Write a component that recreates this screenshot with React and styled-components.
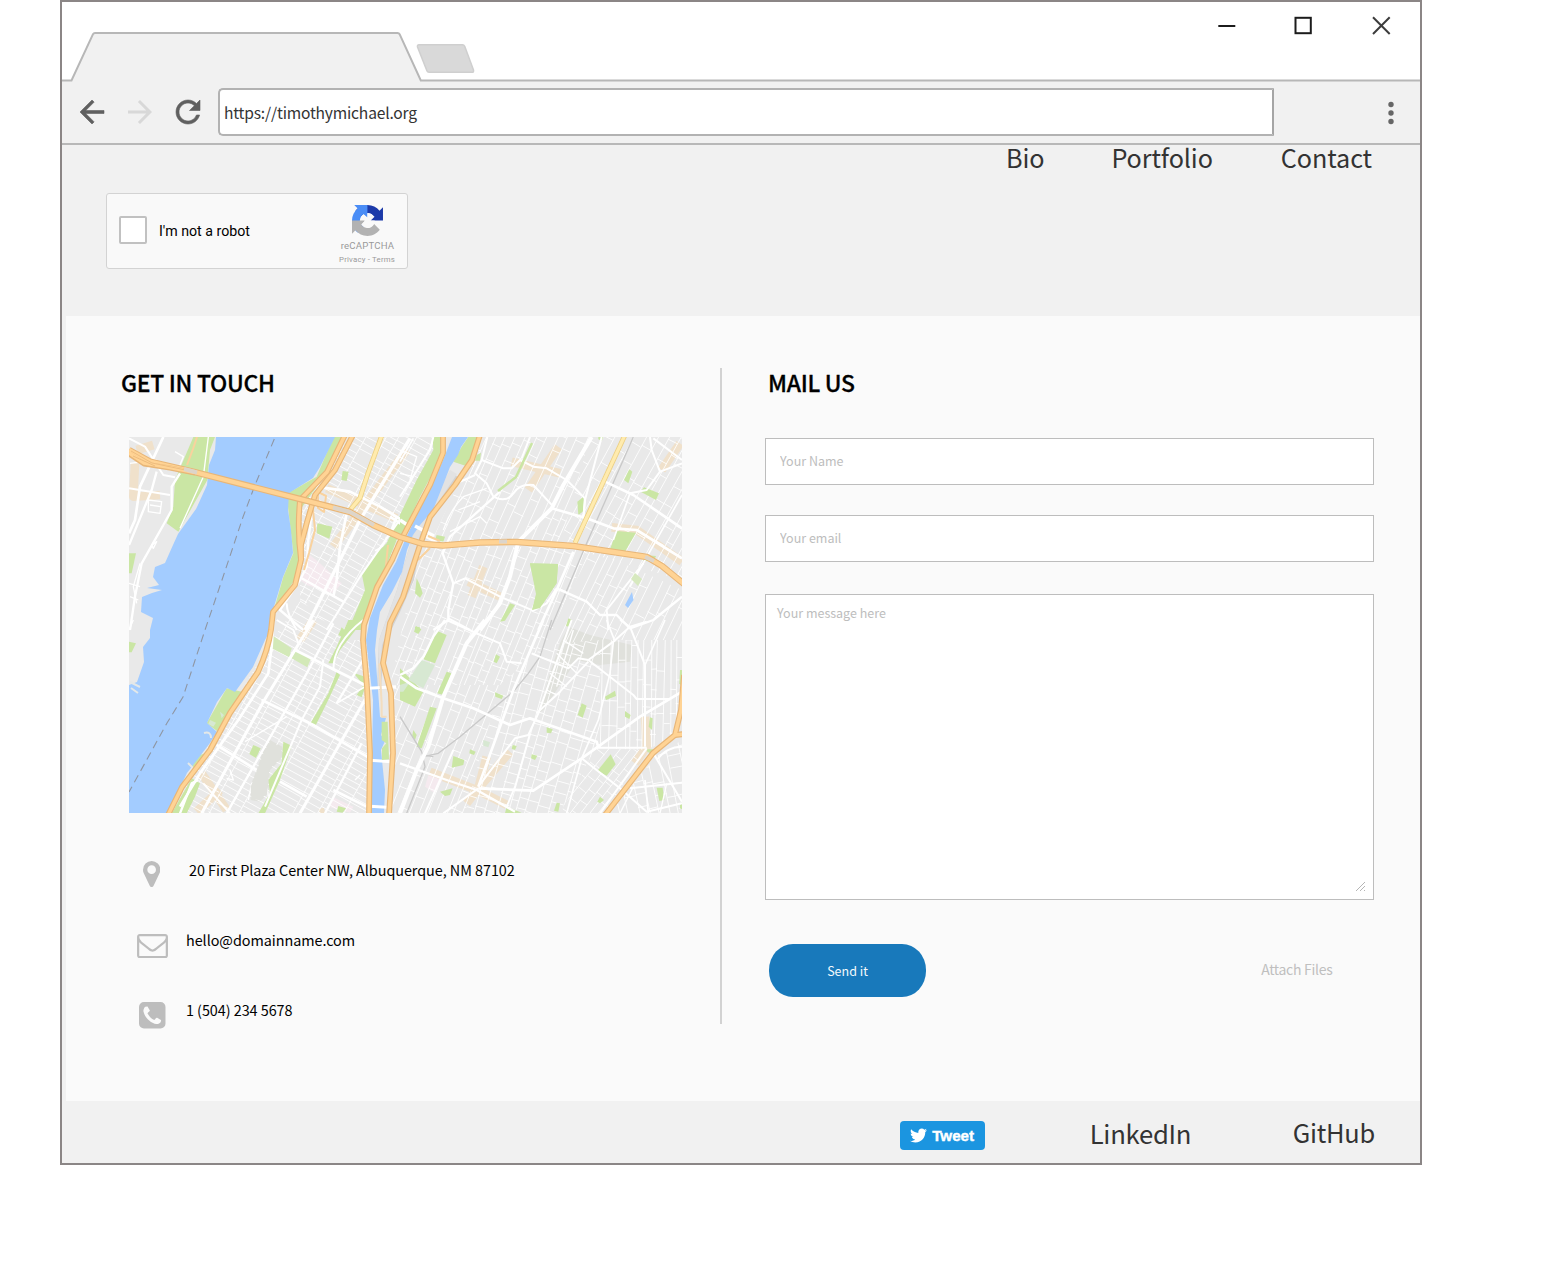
import React from 'react';
import styled, { createGlobalStyle } from 'styled-components';
import { FaTwitter } from 'react-icons/fa';

const GlobalStyle = createGlobalStyle`
  * { box-sizing: border-box; }
  body { margin: 0; background: #fff; font-family: "Noto Sans CJK SC", "Noto Sans", sans-serif; color: #000; }
  svg { display: block; flex: none; }
`;

const Window = styled.div`
  width: 1362px;
  height: 1165px;
  margin-left: 60px;
  border: 2px solid #8b8686;
  background: #f1f1f1;
  display: flex;
  flex-direction: column;
`;

const Toolbar = styled.div`
  height: 61px;
  flex: none;
  display: flex;
  align-items: center;
  padding: 0 12px 1px;
`;

const NavIcon = styled.svg`
  width: 36px;
  height: 36px;
  margin-right: ${p => p.$gap ?? 12}px;
  fill: ${p => (p.$dim ? '#d8d8d8' : '#606060')};
`;

const AddressBar = styled.div`
  width: 1056px;
  height: 48px;
  border: 2px solid #b2b2b2;
  border-right-color: #a5a5a5;
  border-radius: 5px 0 0 5px;
  background: #fff;
  color: #333;
  font-size: 15.6px;
  letter-spacing: -0.2px;
  line-height: 45px;
  padding-left: 4px;
`;

const MenuDots = styled.svg`
  width: 8px;
  height: 26px;
  margin: 2px 13.5px 0 auto;
  fill: #666;
`;

const Header = styled.header`
  height: 173px;
  flex: none;
  border-top: 2px solid #b8b8b8;
`;

const Nav = styled.nav`
  display: flex;
  justify-content: flex-end;
  gap: 67px;
  padding-right: 48px;
  height: 48px;
`;

const NavLink = styled.a`
  font-size: ${p => p.$size ?? 25.2}px;
  letter-spacing: ${p => p.$track ?? -0.1}px;
  line-height: 24px;
  color: #333;
  margin-top: ${p => p.$top ?? 0}px;
  margin-right: ${p => p.$right ?? 0}px;
`;

const Captcha = styled.div`
  width: 302px;
  height: 76px;
  margin-left: 44px;
  border: 1px solid #d3d3d3;
  border-radius: 3px;
  background: #f9f9f9;
  font-family: Roboto, sans-serif;
  display: flex;
  align-items: center;
  padding: 0 12px;
`;

const CheckBox = styled.div`
  width: 28px;
  height: 28px;
  border: 2px solid #c1c1c1;
  border-radius: 2px;
  background: #fff;
  margin: -2px 12px 0 0;
`;

const CaptchaLabel = styled.span`
  font-size: 14.2px;
  line-height: 20px;
`;

const CaptchaBrand = styled.div`
  margin-left: auto;
  margin-top: 8px;
  display: flex;
  flex-direction: column;
  align-items: center;
  svg { margin-left: 1px; }
`;

const BrandLine = styled.span`
  font-size: ${p => p.$size}px;
  line-height: ${p => p.$line}px;
  letter-spacing: ${p => p.$track}px;
  margin-left: ${p => p.$shift ?? 0}px;
  color: #999;
`;

const Contact = styled.main`
  height: 785px;
  flex: none;
  margin-left: 4px;
  background: #fafafa;
  display: grid;
  grid-template-columns: 654px 2px 1fr;
  padding-top: 52px;
`;

const Divider = styled.div`
  height: 656px;
  background: #d2d2d2;
`;

const Title = styled.h2`
  margin: 0 0 0 ${p => p.$left}px;
  height: 30px;
  font-size: 22.9px;
  font-weight: 500;
  letter-spacing: -0.28px;
  line-height: 28.6px;
  -webkit-text-stroke: 0.3px #000;
`;

const MapFrame = styled.div`
  margin: 39px 0 0 63px;
  width: 553px;
  height: 376px;
  overflow: hidden;
`;

const ContactList = styled.ul`
  list-style: none;
  margin: 22px 0 0;
  padding: 0 0 0 71px;
`;

const ContactRow = styled.li`
  height: 70px;
  display: flex;
  align-items: center;
  font-size: 14.4px;
  letter-spacing: -0.05px;
  line-height: 22px;
`;

const IconCell = styled.span`
  width: 31px;
  margin-top: ${p => p.$drop}px;
  margin-right: ${p => p.$gap}px;
  padding-right: ${p => p.$inset ?? 0}px;
  display: flex;
  justify-content: center;
  svg { fill: #bdbdbd; }
`;

const Form = styled.form`
  display: flex;
  flex-direction: column;
  width: 609px;
  margin: 40px 0 0 43px;
`;

const Field = styled.input`
  height: 47px;
  border: 1px solid #bdbdbd;
  background: #fff;
  padding: 0 14px 2px;
  margin-bottom: ${p => p.$after}px;
  font: 12.5px "Noto Sans CJK SC", sans-serif;
  outline: 0;
  &::placeholder { color: #bdbdbd; opacity: 1; }
`;

const MessageBox = styled.div`
  position: relative;
  height: 306px;
`;

const Message = styled.textarea`
  display: block;
  width: 100%;
  height: 100%;
  border: 1px solid #bdbdbd;
  background: #fff;
  padding: 8px 11px;
  resize: none;
  outline: 0;
  font: 12.5px/20px "Noto Sans CJK SC", sans-serif;
  &::placeholder { color: #bdbdbd; opacity: 1; }
`;

const Grip = styled.svg`
  position: absolute;
  right: 8px;
  bottom: 8px;
  stroke: #b5b5b5;
  fill: none;
`;

const Actions = styled.div`
  display: flex;
  justify-content: space-between;
  align-items: center;
  margin-top: 44px;
  padding: 0 41.5px 0 4px;
`;

const SendButton = styled.button`
  width: 157px;
  height: 53px;
  border: 0;
  border-radius: 24px / 26px;
  background: #1879bb;
  color: #f4f9fc;
  font: 12.5px "Noto Sans CJK SC", sans-serif;
  padding: 0;
`;

const Attach = styled.a`
  font-size: 14px;
  letter-spacing: -0.28px;
  line-height: 20px;
  color: #bfbfbf;
  margin-top: -3px;
`;

const Footer = styled.footer`
  flex: 1;
  display: flex;
  align-items: flex-start;
  justify-content: flex-end;
  padding: 20px 45px 0 0;
`;

const Tweet = styled.button`
  width: 85px;
  height: 29px;
  margin-right: 104.5px;
  border: 0;
  border-radius: 4px;
  background: #1b95e0;
  color: #fff;
  display: flex;
  align-items: center;
  gap: 5px;
  padding: 0 0 0 10px;
  font: 700 15.2px "Liberation Sans", sans-serif;
  -webkit-text-stroke: 0.4px #fff;
`;

/* ---------- map ---------- */

function seeded(seed) {
  let s = seed;
  return () => ((s = (s * 16807) % 2147483647) / 2147483647);
}

// Irregular block grid: long streets with cross streets broken from block to block.
function blocks({ cx, cy, angle, w, h, long, cross, seed = 7, skip = 0.12 }) {
  const rnd = seeded(seed);
  const a = (angle * Math.PI) / 180;
  const pt = (u, v) =>
    `${(cx + u * Math.cos(a) - v * Math.sin(a)).toFixed(1)} ${(cy + u * Math.sin(a) + v * Math.cos(a)).toFixed(1)}`;
  let d = '';
  for (let u = -w / 2; u < w / 2; ) {
    const step = long * (0.75 + rnd() * 0.5);
    d += `M${pt(u, -h / 2)}L${pt(u + (rnd() - 0.5) * 4, h / 2)}`;
    const off = rnd() * cross;
    for (let v = -h / 2 + off; v < h / 2; v += cross * (0.85 + rnd() * 0.3)) {
      if (rnd() > skip) d += `M${pt(u, v)}L${pt(u + step, v + (rnd() - 0.5))}`;
    }
    u += step;
  }
  return d;
}

const DISTRICTS = [
  { area: '320,475 350,437 443,437 400,540 345,640 300,600 301,500', cx: 360, cy: 520, angle: 29, w: 190, h: 280, long: 15, cross: 6.6, seed: 5 },
  { area: '301,600 345,640 370,640 370,813 168,813 272,640', cx: 275, cy: 700, angle: 29, w: 260, h: 340, long: 23, cross: 6.2, seed: 11, skip: 0.04 },
  { area: '480,437 590,437 560,545 430,545', cx: 510, cy: 490, angle: 24, w: 190, h: 190, long: 9, cross: 17, seed: 21, skip: 0.3 },
  { area: '590,437 682,437 682,580 560,545', cx: 630, cy: 500, angle: 29, w: 180, h: 200, long: 9.5, cross: 20, seed: 31, skip: 0.3 },
  { area: '420,545 590,548 545,645 500,685 390,685', cx: 470, cy: 620, angle: 22, w: 230, h: 220, long: 8.5, cross: 13, seed: 41, skip: 0.25 },
  { area: '590,548 682,590 682,640 600,640 545,645 560,620', cx: 620, cy: 620, angle: 26, w: 180, h: 180, long: 9, cross: 20, seed: 51, skip: 0.5 },
  { area: '390,685 500,685 465,813 389,813', cx: 440, cy: 740, angle: 22, w: 170, h: 190, long: 9, cross: 18, seed: 61, skip: 0.35 },
  { area: '500,685 545,645 600,640 600,740 560,813 465,813', cx: 540, cy: 730, angle: 16, w: 170, h: 210, long: 10, cross: 11, seed: 71, skip: 0.2 },
  { area: '600,640 682,640 682,735 645,750 600,748', cx: 640, cy: 700, angle: 1, w: 110, h: 130, long: 7, cross: 22, seed: 81, skip: 0.3 },
  { area: '598,748 645,750 605,813 560,813', cx: 600, cy: 780, angle: 38, w: 110, h: 100, long: 9, cross: 14, seed: 91 },
  { area: '682,740 682,813 610,813 655,757', cx: 650, cy: 785, angle: -12, w: 90, h: 90, long: 11, cross: 14, seed: 95, skip: 0.3 },
];

// Four sheets of the map, each drawn on its own triple-scale grid.
const SHEETS = [
  {
    origin: [120, 430],
    sand: ['M860 60L640 350', 'M620 175L830 265', 'M100 45L50 60M45 100L40 200L120 195'],
    pink: ['570,375 600,400 665,460 640,490 560,465 540,450'],
    parks: [
      '220,21 285,21 270,60 262,150 175,305 140,280 160,230 165,150',
      '870,205 835,265 800,340 770,370 725,430 735,480 685,600 735,600 790,430 830,330 870,270',
      '592,280 637,290 628,326 590,310', '668,123 686,125 680,153 664,150',
      '640,21 680,21 590,170 540,240 548,380 530,440 460,545 490,440 520,370 505,240 500,190 520,180 590,140',
      '27,370 48,370 35,430 27,430',
    ],
    grey: [],
    thin: 'M30 100L110 90M85 210L125 215L120 250L85 245ZM90 225L122 230M60 400L40 470L50 520M27 460L60 470M30 500L55 510M165 65L190 80L180 105M265 21L250 140L180 295M95 345L110 335L100 355Z',
    roads: [
      [8, 'M130 21L60 170L45 270L27 310'], [6, 'M27 175L150 195'], [7, 'M110 125L95 180L27 345'],
      [7, 'M180 130L155 170L155 240L130 285L65 400L45 500L30 600'], [6, 'M27 25L75 50L130 135L165 142'],
      [10, 'M870 25L720 270L555 600'], [8, 'M605 172L690 185L780 230L870 285'], [6, 'M870 225L720 440L620 600'],
      [8, 'M680 250L660 350L650 450L640 500'], [7, 'M545 445L670 515'], [7, 'M580 210L565 330L560 410L540 450L480 540L550 600'],
      [6, 'M500 520Q500 550 530 600'], [8, 'M810 260L870 300M830 260L815 300'], [5, 'M800 320Q795 350 765 362'],
    ],
    rail: [],
  },
  {
    origin: [400, 430],
    sand: ['M475 50L385 180', 'M335 95L480 130', 'M250 410L215 500', 'M205 455L300 500', 'M840 40L785 120', 'M635 292L710 300L846 395'],
    pink: [],
    parks: [
      '98,21 130,21 127,75 60,200 0,330 0,255 50,150 100,60', '205,21 240,21 205,110 160,95 185,50',
      '390,400 474,402 470,460 420,535 397,540 410,490', '650,303 708,308 675,365 630,358',
      '732,172 777,190 768,210 722,185', '688,118 697,125 685,160 672,150', '550,200 555,240 535,255 532,215',
      '330,520 345,525 315,572 300,575', '230,75 243,68 240,92 225,92', '110,315 135,320 130,335 105,330',
      '50,445 60,465 68,490 60,503 45,490', '505,565 515,570 505,590 498,588', '735,375 768,378 760,395 730,392',
      '0,490 18,485 15,505 0,510', '45,590 60,592 58,600 45,600', '595,21 610,21 605,33 595,28',
    ],
    grey: [],
    thin: 'M130 300Q150 240 190 200L260 175M150 305L240 260L260 280M175 240L240 215M0 60L50 80L30 150M0 130L40 140',
    roads: [
      [6, 'M245 90L310 115L335 115L360 90L400 110L440 115L500 150L555 205L550 265'], [6, 'M390 21L365 85'],
      [12, 'M575 21L490 165L455 235L355 335L330 440L300 520L240 600'], [8, 'M455 235L560 265L640 295L710 300L846 385'],
      [6, 'M262 21L245 90L225 130L260 160L280 200Q320 220 340 190Q360 160 400 165L460 230'],
      [7, 'M300 185L150 320L128 370L160 460L145 540L145 570L100 600'], [6, 'M170 160L225 135'],
      [8, 'M615 155L700 195L846 295'], [6, 'M750 21L755 60L780 125L846 100'], [6, 'M780 125L740 180L690 190'],
      [8, 'M520 365L470 480L415 600'], [6, 'M605 21L555 210L550 265'], [7, 'M470 475L560 515L600 555L650 555L690 595L760 570L846 500'],
      [6, 'M160 460L195 445L300 500L400 542L440 520L470 475'], [6, 'M145 565L210 600'], [6, 'M730 400L620 540L625 600'],
      [5, 'M846 195L690 470M690 190L640 330'], [6, 'M760 25L846 90'], [6, 'M100 21L90 60L0 200'], [10, 'M0 270L60 310L110 335'],
      [5, 'M0 95L40 25'],
    ],
    rail: ['M700 21L560 340L450 600'],
  },
  {
    origin: [120, 620],
    sand: ['M580 0L540 60', 'M245 460L320 570', 'M300 510L230 575', 'M615 575L600 580'],
    pink: ['640,532 700,560 690,578 630,562'],
    parks: [
      '665,22 678,35 668,52 655,45', '685,0 730,0 660,90 640,130 625,130 650,80',
      '650,155 660,165 620,250 585,320 570,312 625,220', '320,205 365,215 300,340 260,310', '400,375 422,385 408,414 388,402',
      '490,365 515,377 480,480 435,580 415,580 450,520 445,480 485,430', '215,475 240,490 225,530 200,580 155,580',
      '700,158 735,170 738,195 725,232 710,225 730,195', '655,558 678,565 668,578 650,575', '27,65 48,70 35,97 27,97',
      '240,405 255,400 230,450 205,435',
    ],
    pale: ['525,88 573,115 562,142 515,115', '455,45 515,85 508,112 455,85'],
    grey: ['450,360 487,380 490,410 450,450 445,520 420,545 392,540 390,500 410,450 430,390'],
    thin: 'M375 365L500 290M27 30L40 0M330 450L340 480L320 475M705 480L720 465M445 530Q440 460 395 490L385 540',
    roads: [
      [8, 'M460 0L455 80L445 160L355 300L240 460L180 560'], [9, 'M580 0L430 245L245 580'], [7, 'M640 10L560 160L400 440L320 580'],
      [8, 'M525 90L735 195'], [8, 'M425 240L580 315L745 412'], [8, 'M290 375L410 450'], [9, 'M740 230L540 580'],
      [7, 'M725 370L615 580'], [6, 'M610 120L600 200L545 300L435 560'], [8, 'M480 485L560 530'], [5, 'M650 250L735 200'],
      [6, 'M470 0L520 30L535 70'], [7, 'M735 110L650 250'], [6, 'M250 490L330 580'], [7, 'M180 580L215 490L235 480'], [6, 'M730 0Q640 70 640 150'],
      [8, 'M640 510L740 560'],
    ],
    rail: [],
  },
  {
    origin: [400, 620],
    sand: ['M90 455L230 510L320 555', 'M330 395L235 505L200 550', 'M260 410L235 505', 'M735 290L740 380L705 430'],
    pink: ['85,465 127,480 105,520 75,500'],
    parks: [
      '110,32 140,45 105,130 70,118 85,90', '0,145 70,215 45,260 0,240', '140,155 155,160 130,225 112,220',
      '90,260 110,265 65,385 50,380', '160,408 193,420 190,435 155,443', '120,515 158,505 150,525 135,528', '320,560 365,578 315,580',
      '545,250 560,257 548,293 533,285', '440,322 458,328 453,340 440,338', '395,403 412,407 405,420 393,415',
      '632,403 647,433 620,467 592,453', '615,230 645,212 648,228 618,240', '675,273 692,285 688,297 675,290',
      '285,217 310,227 305,237 286,230', '288,103 300,110 290,130 281,125', '210,388 227,395 222,405 208,400',
      '48,18 64,28 55,42 42,35', '770,503 788,503 793,540 778,543', '470,548 480,550 475,575 462,572', '338,375 350,378 345,390 335,386',
      '840,150 846,150 846,200 838,190', '750,292 758,295 756,330 746,320', '600,530 612,540 600,550 592,545', '40,330 50,345 45,360 36,350',
      '840,555 846,552 846,568 840,565', '740,388 760,388 750,400 742,395',
    ],
    pale: ['65,120 105,135 70,205 25,180', '0,195 30,185 10,215 0,215', '250,360 270,367 265,382 250,377'],
    grey: ['505,20 570,45 695,75 690,125 600,135 530,120 430,270 415,280 450,160 480,70'],
    thin: 'M470 100L530 160M450 160L500 200M490 60L550 100M440 210L470 225M520 30L470 200M700 500L660 580M800 490L780 580',
    roads: [
      [12, 'M255 0L200 70L130 230L85 380L50 450L0 580'], [7, 'M135 0L100 50L70 110L40 145L0 165'],
      [8, 'M0 170L50 205L130 235L220 265L330 315L390 295L590 365L595 382'], [6, 'M230 40L300 70L320 125L365 130'],
      [6, 'M140 0L235 42'], [8, 'M430 0L340 210L235 500'], [6, 'M395 100L505 145L535 115L565 120L640 65L690 20L740 5'],
      [6, 'M515 0L415 280L385 345L345 355L235 500'], [6, 'M565 125L480 215L410 280'], [6, 'M565 120L700 225L710 237L810 237'],
      [5, 'M640 65L630 160L595 300L545 415L500 580'], [8, 'M846 215L720 290L545 415L400 512L235 505'],
      [6, 'M690 20L735 135L735 380'], [6, 'M590 383L740 383'], [6, 'M235 505L130 580'], [7, 'M0 430L140 480L230 510L345 575'],
      [6, 'M740 385L600 580'], [6, 'M545 415L660 505L740 575L846 550'], [6, 'M760 400L846 545'], [6, 'M690 505L846 488'],
      [5, 'M390 340L345 500L320 560'], [5, 'M795 0L735 135M620 0L645 65M660 0L690 20'], [6, 'M770 420Q800 380 846 380'], [5, 'M735 480L745 580'],
      [6, 'M160 390L75 580'],
    ],
    rail: ['M455 0L420 110L385 160L340 215L180 350L115 400L70 410', 'M0 290L65 395L75 440L20 580', 'M100 410L70 405'],
  },
];

const BRIDGE = 'M129 450L150 461.700L193 471.700L253 487L300 499L350 512L373 525L400 537L423 544L443 545.500L480 542.500L517 542L573 546L647 557L662 566L684 584';
const HIGHWAYS = [
  'M345 435L327 472L300 500Q297 530 301 560L295 585L273 612L271 630Q268 650 258 672L230 713L210 750L182 787L168 815',
  'M353 435L335 470L315 495L307 522L301 545L301 560',
  'M443 435L443 453L430 485L400 542L392 560L377 587L364 625L363 640L367 687L370 753L369 815',
  'M480 435L472 460L455 485L430 517L420 545L403 597L390 623L383 663L391 693L393 753L389 815',
  'M684 675L681 710L675 735L653 753L605 815',
  'M675 735L684 734',
];
const PARKWAYS = ['M625 435L587 517L575 543', 'M382 435L368 473L360 498L350 510'];

function CityMap() {
  return (
    <svg width="553" height="376" viewBox="129 437 553 376" fill="none" strokeLinejoin="round">
      <rect x="129" y="437" width="553" height="376" fill="#e9e9e9" />
      {SHEETS.map((s, i) => (
        <g key={i} transform={`translate(${s.origin}) scale(.33333)`}>
          <g stroke="#f0e1cb" strokeWidth="26">{s.sand.map(d => <path key={d} d={d} />)}</g>
          {s.pink.map(p => <polygon key={p} points={p} fill="#f5eaef" />)}
          {s.grey.map(p => <polygon key={p} points={p} fill="#e0e1dc" />)}
        </g>
      ))}
      {DISTRICTS.map((b, i) => (
        <g key={i}>
          <clipPath id={`d${i}`}><polygon points={b.area} /></clipPath>
          <path d={blocks(b)} clipPath={`url(#d${i})`} stroke="#fff" strokeWidth="1" opacity=".85" />
        </g>
      ))}
      {SHEETS.map((s, i) => (
        <g key={i} transform={`translate(${s.origin}) scale(.33333)`}>
          {s.parks.map(p => <polygon key={p} points={p} fill="#cae6a4" />)}
          {(s.pale || []).map(p => <polygon key={p} points={p} fill={i === 2 ? '#d3e9b8' : '#d7e8d2'} />)}
          <path d={s.thin} stroke="#fff" strokeWidth="4" />
          <g stroke="#c9c9c9" strokeWidth="4">{s.rail.map(d => <path key={d} d={d} />)}</g>
          {s.roads.map(([w, d]) => <path key={d} d={d} stroke="#fff" strokeWidth={w} />)}
        </g>
      ))}
      <g transform="translate(120 620) scale(.33333)">
        <polygon points="450,366 484,382 486,410 448,448 442,516 420,541 394,536 392,500 412,450 432,395" fill="#e0e1dc" />
      </g>
      <path d="M532 443L525 458L516 477L498 491" stroke="#cae6a4" strokeWidth="2.500" />
      <polygon points="530,563.500 558,564 556.500,583 540,608 532,610 536,594" fill="#cae6a4" />
      <polygon points="635,573 642,579 638,586 631,579" fill="#d7e9bf" />
      <polygon points="632,592 633.500,600 628,608 625,605" fill="#a3ccff" />

      <polygon fill="#a3ccff" points="216,437 215,450 209,465 207,485 197,507 196,509 178,534 173,545 165,563 155,567 153,577 159,585 147,588 162,590 152,593 142,597 141,612 153,618 150,630 150,638 143,647 144,662 137,682 129,685 129,813 168,813 187,773 210,743 217,732 207,723 217,702 227,688 235,692 253,667 265,640 270,630 273,610 283,577 293,553 291,530 288,510 289,493 313,478 320,467 335,437" />
      <path d="M130 682L140 687M131 688L138 693M204 733Q211 731 211 738M188 763L193 768" stroke="#e4e8e8" strokeWidth="2" />
      <polygon fill="#d3d3d3" points="455,475 458,477 434,512 422,535 414,580 400,612 384,645 381,690 377,690 379,640 397,590 407,555 414,533" />
      <polygon fill="#e2e2e2" points="450,470 457,474 432,512 420,535 411,575 397,612 382,645 379,690 378,690 379,640 397,590 407,555 414,533" />
      <polygon fill="#a3ccff" points="452,437 468,437 461,447 458,455 450,467 441,490 433,510 420,525 413,535 407,550 402,572 392,592 380,612 377,630 375,650 378,690 380,717 386,718 381,735 385,741 381,750 382,760 385,790 384,813 371,813 373,700 366,640 370,618 383,585 396,562 405,540 412,525 431,487 444,458" />
      <g transform="translate(120 620) scale(.33333)">
        <path d="M745 205L828 200M750 421L825 426M750 559L800 562" stroke="#fff" strokeWidth="9" />
        <path d="M778 130L785 250L785 290L800 290" stroke="#f3ddbf" strokeWidth="6" />
        <polygon points="785,305 803,305 807,418 786,420 786,385 799,370 785,360" fill="#cae6a4" />
        <path d="M300 275L312 285L305 295ZM270 300L288 308L280 320L265 312Z" fill="#d7e8d2" />
      </g>
      <path d="M415 526L434 536" stroke="#fff" strokeWidth="3.500" />
      <path d="M274.300 439L255 485L243 517L223 577L205 630L183 697L167 723L129 792" stroke="#8f96a3" strokeWidth="1.100" strokeDasharray="8 5" />

      <g stroke="#f9d29e" strokeWidth="2">
        <path d="M187 465L193 449L197 437M318 492L326 496L324 512L318 508Z" />
        <path d="M312 500L315 530L309 553L304 570M395 560L386 565L388 545M428 536L440 541M418 560L430 548" />
      </g>
      <g stroke="#edd083" strokeWidth="5">{PARKWAYS.map(d => <path key={d} d={d} />)}</g>
      <g stroke="#ffebae" strokeWidth="3.300">{PARKWAYS.map(d => <path key={d} d={d} />)}</g>
      <g stroke="#e8b678" strokeWidth="5.800">{HIGHWAYS.map(d => <path key={d} d={d} />)}</g>
      <g stroke="#ffd394" strokeWidth="3.500">{HIGHWAYS.map(d => <path key={d} d={d} />)}</g>
      <path d={BRIDGE} stroke="#e8b678" strokeWidth="6.500" />
      <path d={BRIDGE} stroke="#ffd394" strokeWidth="4.300" />
      <path d="M129 454L144 464L170 468L195 473" stroke="#e8b678" strokeWidth="5" />
      <path d="M129 453L144 463L170 467.500L195 472.500" stroke="#ffd394" strokeWidth="3.500" />
      <path d="M131 451L152 463L195 472M133 456L155 466" stroke="#e8b678" strokeWidth=".8" />
      <path d="M184 469L197 472.500M333 507.500L350 512L374 525M499 541.500L507 541.500M645 557L654 561" stroke="#ddd5ca" strokeWidth="4" />
    </svg>
  );
}

/* ---------- icons ---------- */

const PinIcon = () => (
  <svg width="17.300" height="26" viewBox="384 128 1024 1536"><path d="M1152 640q0-106-75-181t-181-75-181 75-75 181 75 181 181 75 181-75 75-181zm256 0q0 109-33 179l-364 774q-16 33-47.500 52t-67.500 19-67.500-19-46.500-52l-365-774q-33-70-33-179 0-212 150-362t362-150 362 150 150 362z" /></svg>
);
const MailIcon = () => (
  <svg width="31" height="24.300" viewBox="0 256 1792 1408"><path d="M1664 1504v-768q-32 36-69 66-268 206-426 338-51 43-83 67t-86.500 48.500-102.500 24.500h-2q-48 0-102.500-24.500t-86.500-48.500-83-67q-158-132-426-338-37-30-69-66v768q0 13 9.500 22.500t22.500 9.500h1472q13 0 22.500-9.500t9.500-22.500zm0-1051v-24.500l-.5-13-3-12.500-5.500-9-9-7.500-14-2.500h-1472q-13 0-22.500 9.500t-9.500 22.500q0 168 147 284 193 152 401 317 6 5 35 29.500t46 37.500 44.500 31.500 50.500 27.500 43 9h2q20 0 43-9t50.500-27.500 44.500-31.500 46-37.500 35-29.500q208-165 401-317 54-43 100.500-115.500t46.500-131.500zm128-37v1088q0 66-47 113t-113 47h-1472q-66 0-113-47t-47-113v-1088q0-66 47-113t113-47h1472q66 0 113 47t47 113z" /></svg>
);
const PhoneIcon = () => (
  <svg width="26.500" height="26.500" viewBox="128 128 1536 1536"><path d="M1408 1193q0-11-2-16t-18-16.500-40.500-25-47.500-26.500-45.500-25-28.500-15q-5-3-19-13t-25-15-21-5q-15 0-36.500 20.500t-39.500 45-38.500 45-33.500 20.500q-7 0-16.500-3.500t-15.500-6.500-17-9.500-14-8.500q-99-55-170-126.500t-127-170.500q-2-3-8.500-14t-9.500-17-6.500-15.500-3.500-16.500q0-13 20.500-33.500t45-38.500 45-39.500 20.500-36.500q0-10-5-21t-15-25-13-19q-3-6-15-28.500t-25-45.500-26.500-47.500-25-40.500-16.500-18-16-2q-48 0-101 22-46 21-80 94.500t-34 130.500q0 16 2.500 34t5 30.500 9 33 10 29.500 12.500 33 11 30q60 164 216.500 320.500t320.500 216.500q6 2 30 11t33 12.500 29.500 10 33 9 30.500 5 34 2.500q57 0 130.500-34t94.500-80q22-53 22-101zm256-777v960q0 119-84.500 203.500t-203.500 84.500h-960q-119 0-203.500-84.500t-84.500-203.500v-960q0-119 84.500-203.500t203.500-84.500h960q119 0 203.500 84.500t84.500 203.500z" /></svg>
);

const TabStrip = () => (
  <svg width="1358" height="80" viewBox="62 2 1358 80">
    <rect x="62" y="2" width="1358" height="80" fill="#fff" />
    <path d="M62 80.500H72L93 34Q93.500 33 95 33H397.500Q399 33 399.500 34L420.500 80.500H1420V83H62Z" fill="#f1f1f1" />
    <path d="M62 80.500H71.500L93 34.200Q93.600 33 95 33H397.500Q399 33 399.600 34.200L420.800 80.500H1420" fill="none" stroke="#b7b7b7" strokeWidth="2" />
    <path d="M419 44.800H462.500Q464 44.800 464.700 46.300L473.500 70Q474 72.300 472 72.300H429Q427.500 72.300 427 71L417.500 47Q417 44.800 419 44.800Z" fill="#d9d9d9" stroke="#cfcfcf" strokeWidth="1.500" strokeLinejoin="round" />
    <g fill="none" stroke="#1c1c1c" strokeWidth="2">
      <path d="M1218.300 26H1235.300" />
      <rect x="1295.500" y="17.800" width="15.300" height="15.400" />
      <path d="M1373 17.300L1389.700 34M1389.700 17.300L1373 34" stroke="#3c3c3c" />
    </g>
  </svg>
);

const CaptchaLogo = () => (
  <svg width="31" height="31" viewBox="0 0 64 64">
    <path d="M64 31.955l-.033-1.370V4.687l-7.160 7.160C50.948 4.674 42.033.093 32.050.093c-10.400 0-19.622 4.960-25.458 12.640l11.736 11.860a15.550 15.550 0 0 1 4.754-5.334c2.050-1.600 4.952-2.906 8.968-2.906.485 0 .860.057 1.135.163 4.976.393 9.288 3.140 11.828 7.124l-8.307 8.307L64 31.953" fill="#1c3aa9" />
    <path d="M31.862.094l-1.370.033H4.594l7.160 7.160C4.580 13.147 0 22.060 0 32.046c0 10.400 4.960 19.622 12.640 25.458L24.500 45.768a15.550 15.550 0 0 1-5.334-4.754c-1.600-2.050-2.906-4.952-2.906-8.968 0-.485.057-.860.163-1.135.393-4.976 3.140-9.288 7.124-11.828l8.307 8.307L31.860.095" fill="#4a8df6" />
    <path d="M.001 32.045l.033 1.370v25.898l7.160-7.160c5.860 7.173 14.774 11.754 24.760 11.754 10.400 0 19.622-4.960 25.458-12.640l-11.736-11.860a15.550 15.550 0 0 1-4.754 5.334c-2.050 1.600-4.952 2.906-8.968 2.906-.485 0-.860-.057-1.135-.163-4.976-.393-9.288-3.140-11.828-7.124l8.307-8.307c-10.522.040-22.400.066-27.295-.005" fill="#b2b2b2" />
    <path d="M32 17L40 18.500L46.500 24L38.500 32H47L44 41L36 47L28 46L20 41L26.500 32.500L18.500 24L24 19L32 26Z" fill="#f9f9f9" />
  </svg>
);

const ARROW = 'M20 11H7.830l5.590-5.590L12 4l-8 8 8 8 1.410-1.410L7.830 13H20v-2z';

export default function App() {
  return (
    <>
      <GlobalStyle />
      <Window>
        <TabStrip />
        <Toolbar>
          <NavIcon viewBox="0 0 24 24"><path d={ARROW} stroke="#606060" strokeWidth=".4" /></NavIcon>
          <NavIcon viewBox="0 0 24 24" $dim><path d={ARROW} transform="rotate(180 12 12)" /></NavIcon>
          <NavIcon viewBox="0 0 24 24"><path stroke="#606060" strokeWidth=".4" d="M17.650 6.350C16.200 4.900 14.210 4 12 4c-4.420 0-7.990 3.580-7.990 8s3.570 8 7.990 8c3.730 0 6.840-2.550 7.730-6h-2.080c-.820 2.330-3.040 4-5.650 4-3.310 0-6-2.690-6-6s2.690-6 6-6c1.660 0 3.140.690 4.220 1.780L13 11h7V4l-2.350 2.350z" /></NavIcon>
          <AddressBar>https://timothymichael.org</AddressBar>
          <MenuDots viewBox="0 0 8 26"><circle cx="4" cy="4.500" r="2.700" /><circle cx="4" cy="13" r="2.700" /><circle cx="4" cy="21.500" r="2.700" /></MenuDots>
        </Toolbar>
        <Header>
          <Nav>
            <NavLink>Bio</NavLink>
            <NavLink $right={1}>Portfolio</NavLink>
            <NavLink>Contact</NavLink>
          </Nav>
          <Captcha>
            <CheckBox />
            <CaptchaLabel>I'm not a robot</CaptchaLabel>
            <CaptchaBrand>
              <CaptchaLogo />
              <BrandLine $size={9.6} $line={19} $track={0.2} $shift={1}>reCAPTCHA</BrandLine>
              <BrandLine $size={7.8} $line={10} $track={0.2}>Privacy - Terms</BrandLine>
            </CaptchaBrand>
          </Captcha>
        </Header>
        <Contact>
          <section>
            <Title $left={55}>GET IN TOUCH</Title>
            <MapFrame><CityMap /></MapFrame>
            <ContactList>
              <ContactRow><IconCell $drop={8} $gap={21} $inset={2}><PinIcon /></IconCell>20 First Plaza Center NW, Albuquerque, NM 87102</ContactRow>
              <ContactRow><IconCell $drop={12.5} $gap={18}><MailIcon /></IconCell>hello@domainname.com</ContactRow>
              <ContactRow><IconCell $drop={10.5} $gap={18}><PhoneIcon /></IconCell>1 (504) 234 5678</ContactRow>
            </ContactList>
          </section>
          <Divider />
          <section>
            <Title $left={46}>MAIL US</Title>
            <Form>
              <Field placeholder="Your Name" $after={30} />
              <Field placeholder="Your email" $after={32} />
              <MessageBox>
                <Message placeholder="Your message here" />
                <Grip width="11" height="11" viewBox="0 0 11 11"><path d="M1 10L10 1M5 10L10 5M9 10L10 9" /></Grip>
              </MessageBox>
              <Actions>
                <SendButton type="button">Send it</SendButton>
                <Attach>Attach Files</Attach>
              </Actions>
            </Form>
          </section>
        </Contact>
        <Footer>
          <Tweet><FaTwitter size={17} />Tweet</Tweet>
          <NavLink $size={25.7} $track={-0.28} $right={101.5}>LinkedIn</NavLink>
          <NavLink $size={25.4} $track={-0.22} $top={-1}>GitHub</NavLink>
        </Footer>
      </Window>
    </>
  );
}
